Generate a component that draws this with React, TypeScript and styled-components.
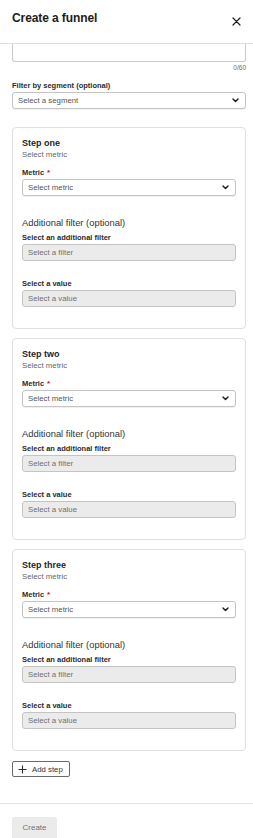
import React from 'react';
import styled, { createGlobalStyle } from 'styled-components';

const GlobalStyle = createGlobalStyle`
    html, body {
        margin: 0;
        padding: 0;
        background: #ffffff;
    }
    body {
        font-family: "Liberation Sans", Arial, sans-serif;
        color: #1c1c1c;
    }
    * {
        box-sizing: border-box;
    }
`;

const Panel = styled.div`
    width: 253px;
    height: 838px;
    display: flex;
    flex-direction: column;
    overflow: hidden;
`;

const Header = styled.div`
    height: 44px;
    flex-shrink: 0;
    display: flex;
    align-items: flex-start;
    justify-content: space-between;
    padding: 11px 12px 0 12px;
    border-bottom: 1px solid #dedede;
`;

const Title = styled.h1`
    margin: 0;
    font-size: 12px;
    line-height: 14px;
    font-weight: 700;
    letter-spacing: -0.1px;
`;

const CloseButton = styled.button`
    border: none;
    background: none;
    padding: 0;
    margin-top: 5px;
    width: 10px;
    height: 10px;
    display: flex;
    align-items: center;
    justify-content: center;
`;

const Body = styled.div`
    flex: 1;
    min-height: 0;
    overflow: hidden;
    padding: 0 7px 0 12px;
    display: flex;
    flex-direction: column;
`;

const TextAreaStub = styled.div`
    height: 18px;
    flex-shrink: 0;
    border: 1px solid #c9c9c9;
    border-top: none;
    border-radius: 0 0 3px 3px;
`;

const Counter = styled.div`
    margin-top: 1px;
    text-align: right;
    font-size: 6.5px;
    line-height: 10px;
    color: #6e6e6e;
`;

const FieldLabel = styled.div<{ $top?: number }>`
    margin-top: ${({ $top }) => $top ?? 0}px;
    margin-bottom: 1px;
    font-size: 7.5px;
    line-height: 10px;
    font-weight: 700;
    color: #2b2b2b;
    display: flex;
    align-items: center;
    gap: 3px;
`;

const Required = styled.span`
    color: #cc1016;
    font-size: 8px;
    line-height: 8px;
`;

const SelectBox = styled.div<{ $disabled?: boolean }>`
    height: 17px;
    flex-shrink: 0;
    display: flex;
    align-items: center;
    justify-content: space-between;
    padding: 0 6px 0 5px;
    border: 1px solid #c4c4c4;
    border-radius: 3px;
    background: ${({ $disabled }) => ($disabled ? '#ebebeb' : '#ffffff')};
    box-shadow: ${({ $disabled }) => ($disabled ? 'none' : '0 1px 0 rgba(0,0,0,0.06)')};
    font-size: 7.8px;
    color: ${({ $disabled }) => ($disabled ? '#6f6f6f' : '#555555')};
`;

const StepCard = styled.section<{ $top: number }>`
    margin-top: ${({ $top }) => $top}px;
    flex-shrink: 0;
    height: 202px;
    border: 1px solid #e0e0e0;
    border-radius: 4px;
    padding: 9px 9px 0 9px;
    display: flex;
    flex-direction: column;
`;

const StepTitle = styled.h2`
    margin: 0;
    font-size: 9px;
    line-height: 12px;
    font-weight: 700;
    color: #1f1f1f;
`;

const StepSub = styled.div`
    margin-top: 1px;
    font-size: 7.8px;
    line-height: 10px;
    color: #666666;
`;

const SectionHeading = styled.h3`
    margin: 21px 0 0 0;
    font-size: 9.4px;
    line-height: 12px;
    font-weight: 400;
    color: #333333;
`;

const AddButton = styled.button`
    margin-top: 10px;
    align-self: flex-start;
    height: 16px;
    display: flex;
    align-items: center;
    gap: 5px;
    padding: 0 6px 0 5px;
    border: 1px solid #6a6a6a;
    border-radius: 2px;
    background: #ffffff;
    font-family: "Liberation Sans", Arial, sans-serif;
    font-size: 7.8px;
    color: #333333;
`;

const Footer = styled.div`
    height: 35px;
    flex-shrink: 0;
    border-top: 1px solid #e2e2e2;
    padding: 12px 12px 0 12px;
`;

const CreateButton = styled.button`
    width: 45px;
    height: 26px;
    border: none;
    border-radius: 2px;
    background: #ebebeb;
    font-family: "Liberation Sans", Arial, sans-serif;
    font-size: 8px;
    color: #737373;
    padding: 0 0 4px 0;
`;

const Chevron = () => (
    <svg width="7" height="5" viewBox="0 0 7 5">
        <path d="M1 1 L3.5 3.6 L6 1" fill="none" stroke="#1f1f1f" strokeWidth="1.4" strokeLinecap="round" strokeLinejoin="round" />
    </svg>
);

const CloseIcon = () => (
    <svg width="9" height="9" viewBox="0 0 9 9">
        <path d="M1 1 L8 8 M8 1 L1 8" stroke="#1f1f1f" strokeWidth="1.2" strokeLinecap="round" />
    </svg>
);

const PlusIcon = () => (
    <svg width="9" height="9" viewBox="0 0 9 9">
        <path d="M4.5 0.5 V8.5 M0.5 4.5 H8.5" stroke="#2a2a2a" strokeWidth="1.1" />
    </svg>
);

const steps = ['Step one', 'Step two', 'Step three'];

const Step = ({ title, top }: { title: string; top: number }) => (
    <StepCard $top={top}>
        <StepTitle>{title}</StepTitle>
        <StepSub>Select metric</StepSub>
        <FieldLabel $top={8}>
            Metric <Required>*</Required>
        </FieldLabel>
        <SelectBox>
            Select metric
            <Chevron />
        </SelectBox>
        <SectionHeading>Additional filter (optional)</SectionHeading>
        <FieldLabel $top={4}>Select an additional filter</FieldLabel>
        <SelectBox $disabled>Select a filter</SelectBox>
        <FieldLabel $top={18}>Select a value</FieldLabel>
        <SelectBox $disabled>Select a value</SelectBox>
    </StepCard>
);

export default function App() {
    return (
        <>
            <GlobalStyle />
            <Panel>
                <Header>
                    <Title>Create a funnel</Title>
                    <CloseButton aria-label="Close">
                        <CloseIcon />
                    </CloseButton>
                </Header>
                <Body>
                    <TextAreaStub />
                    <Counter>0/60</Counter>
                    <FieldLabel $top={8}>Filter by segment (optional)</FieldLabel>
                    <SelectBox>
                        Select a segment
                        <Chevron />
                    </SelectBox>
                    {steps.map((s, i) => (
                        <Step key={s} title={s} top={i === 0 ? 18 : 9} />
                    ))}
                    <AddButton>
                        <PlusIcon />
                        Add step
                    </AddButton>
                </Body>
                <Footer>
                    <CreateButton>Create</CreateButton>
                </Footer>
            </Panel>
        </>
    );
}
